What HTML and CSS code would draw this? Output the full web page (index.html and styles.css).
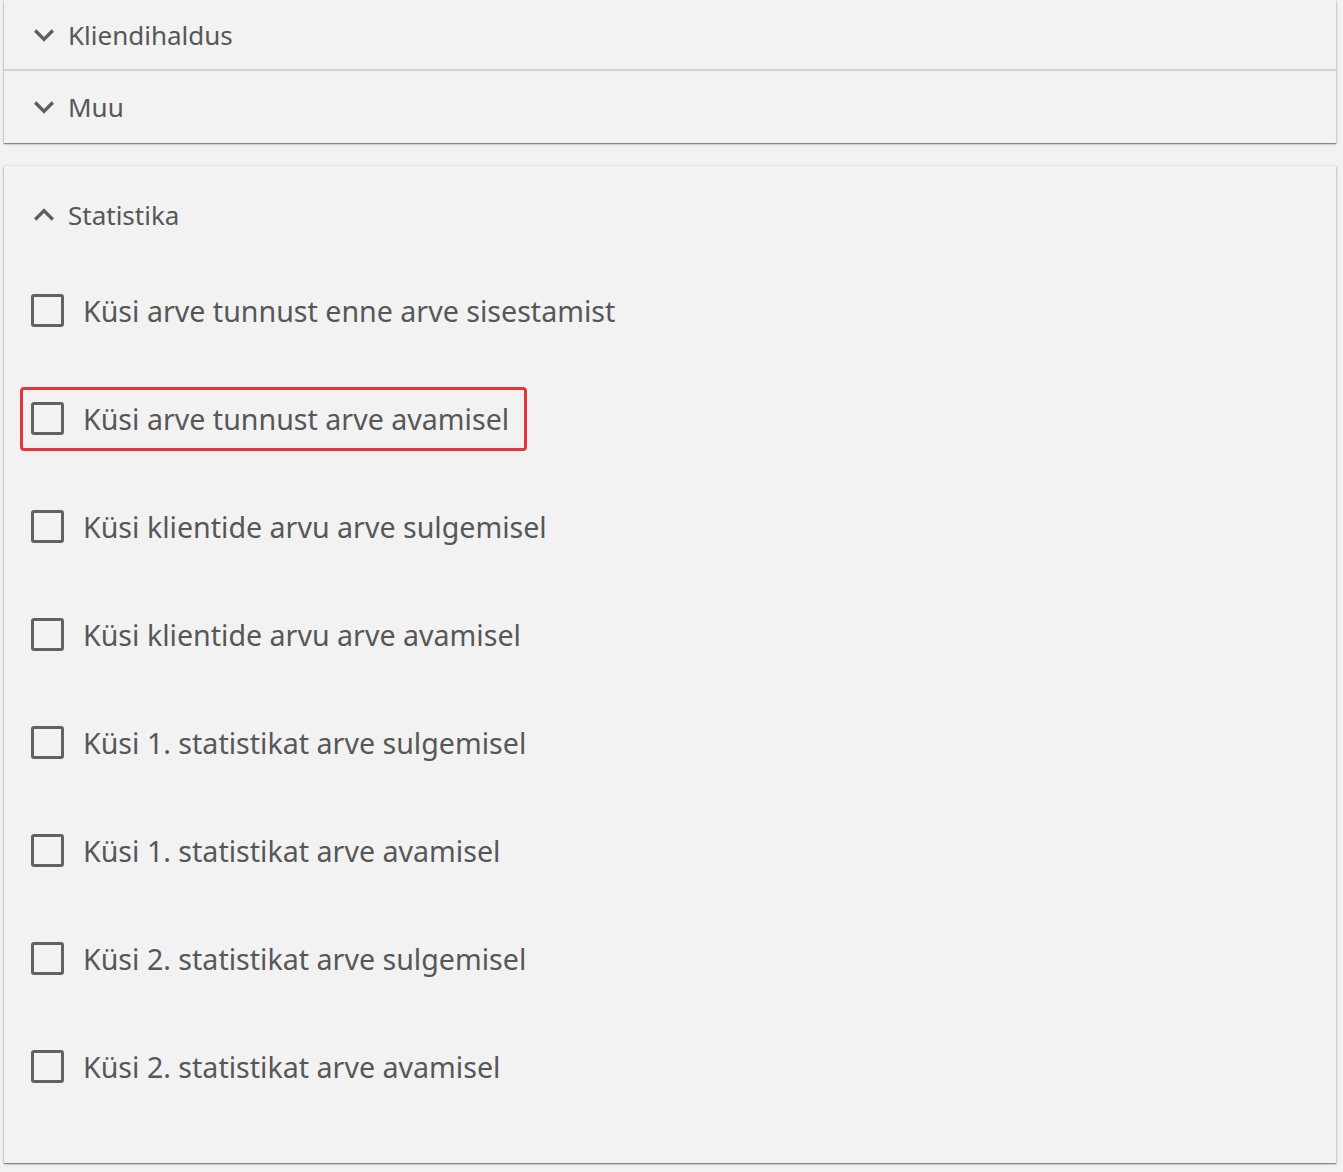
FILE: index.html
```html
<!DOCTYPE html>
<html lang="et">
<head>
<meta charset="utf-8">
<title>Seaded</title>
<link rel="stylesheet" href="styles.css">
</head>
<body>
<div class="page">
  <section class="card card-collapsed">
    <div class="panel-head">
      <svg class="chev" viewBox="0 0 24 24"><path d="M16.59 8.59L12 13.17 7.41 8.59 6 10l6 6 6-6z"/></svg>
      <span class="panel-title">Kliendihaldus</span>
    </div>
    <div class="divider"></div>
    <div class="panel-head">
      <svg class="chev" viewBox="0 0 24 24"><path d="M16.59 8.59L12 13.17 7.41 8.59 6 10l6 6 6-6z"/></svg>
      <span class="panel-title">Muu</span>
    </div>
  </section>

  <section class="card card-open">
    <div class="panel-head panel-head-open">
      <svg class="chev" viewBox="0 0 24 24"><path d="M12 8l-6 6 1.41 1.41L12 10.83l4.59 4.58L18 14z"/></svg>
      <span class="panel-title">Statistika</span>
    </div>
    <ul class="options">
      <li class="option"><label class="opt-label"><span class="box"></span><span class="opt-text">Küsi arve tunnust enne arve sisestamist</span></label></li>
      <li class="option"><label class="opt-label opt-highlight"><span class="box"></span><span class="opt-text">Küsi arve tunnust arve avamisel</span></label></li>
      <li class="option"><label class="opt-label"><span class="box"></span><span class="opt-text">Küsi klientide arvu arve sulgemisel</span></label></li>
      <li class="option"><label class="opt-label"><span class="box"></span><span class="opt-text">Küsi klientide arvu arve avamisel</span></label></li>
      <li class="option"><label class="opt-label"><span class="box"></span><span class="opt-text">Küsi 1. statistikat arve sulgemisel</span></label></li>
      <li class="option"><label class="opt-label"><span class="box"></span><span class="opt-text">Küsi 1. statistikat arve avamisel</span></label></li>
      <li class="option"><label class="opt-label"><span class="box"></span><span class="opt-text">Küsi 2. statistikat arve sulgemisel</span></label></li>
      <li class="option"><label class="opt-label"><span class="box"></span><span class="opt-text">Küsi 2. statistikat arve avamisel</span></label></li>
    </ul>
  </section>
</div>
</body>
</html>
```
FILE: styles.css
```css
html, body {
  margin: 0;
  padding: 0;
  background: #f2f2f2;
}
body {
  font-family: "Noto Sans", "Open Sans", sans-serif;
  color: #575757;
}
.page {
  padding: 0 7px 9px 4px;
  display: flex;
  flex-direction: column;
  gap: 23px;
}
.card {
  background: #f2f2f2;
  box-shadow: 0 1px 1px rgba(0, 0, 0, 0.35), 0 1px 3px rgba(0, 0, 0, 0.2), 0 0 2px rgba(0, 0, 0, 0.1);
}
.panel-head {
  height: 69px;
  display: flex;
  align-items: center;
  padding-left: 20px;
  gap: 4px;
}
.card-collapsed .divider + .panel-head {
  height: 72px;
}
.divider {
  height: 2px;
  background: #d3d3d3;
}
.chev {
  width: 40px;
  height: 40px;
  fill: #5f5f5f;
  flex: none;
}
.panel-title {
  font-size: 26px;
  line-height: 1;
  color: #575757;
}
.card-open {
  padding: 13px 0 42px;
}
.panel-head-open {
  height: 72px;
  margin-bottom: 6px;
}
.options {
  list-style: none;
  margin: 0;
  padding: 0;
}
.option {
  height: 108px;
  display: flex;
  align-items: center;
}
.opt-label {
  display: inline-flex;
  align-items: center;
  box-sizing: border-box;
  height: 64px;
  margin-left: 16px;
  padding: 0 15px 0 8px;
  border: 3px solid transparent;
  border-radius: 4px;
  gap: 19px;
  cursor: pointer;
}
.opt-highlight {
  border-color: #e5343b;
}
.box {
  width: 33px;
  height: 33px;
  box-sizing: border-box;
  border: 3px solid #626262;
  border-radius: 3px;
  flex: none;
  margin-top: -2px;
}
.opt-text {
  font-size: 28.6px;
  line-height: 1;
  color: #575757;
}
```
